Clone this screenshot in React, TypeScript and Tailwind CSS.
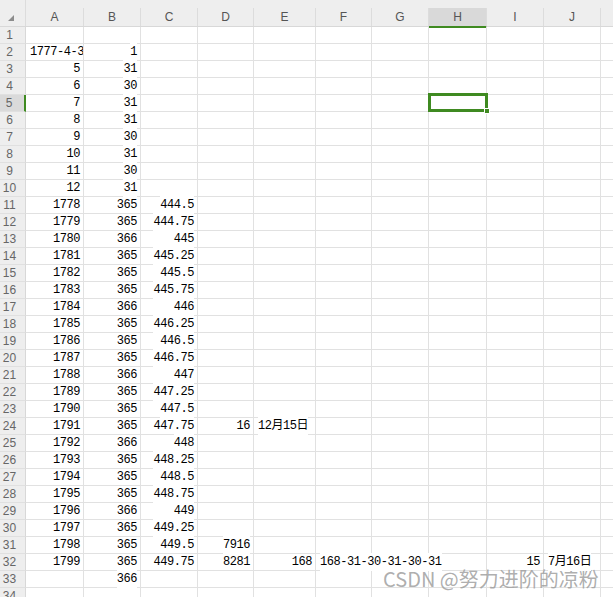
import React from 'react';

const COLS = ['A', 'B', 'C', 'D', 'E', 'F', 'G', 'H', 'I', 'J', 'K'];
const WIDTHS = [58, 57, 57, 56, 62, 56, 57, 58, 57, 57, 40];

type Val = string | number | null;

// row number -> cells A..J
const data: Record<number, Val[]> = {
  2: ['1777-4-3', 1],
  3: [5, 31],
  4: [6, 30],
  5: [7, 31],
  6: [8, 31],
  7: [9, 30],
  8: [10, 31],
  9: [11, 30],
  10: [12, 31],
  11: [1778, 365, '444.5'],
  12: [1779, 365, '444.75'],
  13: [1780, 366, 445],
  14: [1781, 365, '445.25'],
  15: [1782, 365, '445.5'],
  16: [1783, 365, '445.75'],
  17: [1784, 366, 446],
  18: [1785, 365, '446.25'],
  19: [1786, 365, '446.5'],
  20: [1787, 365, '446.75'],
  21: [1788, 366, 447],
  22: [1789, 365, '447.25'],
  23: [1790, 365, '447.5'],
  24: [1791, 365, '447.75', 16, '12月15日'],
  25: [1792, 366, 448],
  26: [1793, 365, '448.25'],
  27: [1794, 365, '448.5'],
  28: [1795, 365, '448.75'],
  29: [1796, 366, 449],
  30: [1797, 365, '449.25'],
  31: [1798, 365, '449.5', 7916],
  32: [1799, 365, '449.75', 8281, 168, '168-31-30-31-30-31', null, null, 15, '7月16日'],
  33: [null, 366],
};

const isText = (v: Val) => typeof v === 'string' && !/^[\d.]+$/.test(v);

function Cell({ v, w, clip }: { v: Val; w: number; clip: boolean }) {
  const left = v !== null && isText(v);
  return (
    <div
      style={{ width: w }}
      className={`h-[17px] shrink-0 border-r border-b border-[#e1e1e1] flex items-center whitespace-nowrap ${
        left ? 'justify-start pl-[4px]' : 'justify-end pr-[3px]'
      } ${clip ? 'overflow-hidden' : 'overflow-visible'}`}
    >
      {v !== null && <span className="relative z-10 bg-white">{v}</span>}
    </div>
  );
}

export default function App() {
  const rows = Array.from({ length: 34 }, (_, i) => i + 1);
  return (
    <div className="relative w-[613px] h-[597px] overflow-hidden bg-white font-['Liberation_Mono','Noto_Sans_CJK_SC',monospace] text-[12px] tracking-[-0.45px] text-black">
      {/* column headers */}
      <div className="flex h-[27px] bg-[#eeeeee] border-b border-[#d8d8d8] font-['Liberation_Sans',Arial,sans-serif] tracking-normal text-[12px] text-[#555]">
        <div className="w-[26px] shrink-0 flex items-end pb-[5px] pl-[8px] border-r border-[#dcdcdc]">
          <svg width="6" height="6" viewBox="0 0 6 6">
            <polygon points="6,0 6,6 0,6" fill="#8c8c8c" />
          </svg>
        </div>
        {COLS.map((c, i) => (
          <div key={c} style={{ width: WIDTHS[i] }} className="shrink-0 flex flex-col pt-[8px]">
            <div
              className={`flex-1 flex items-center justify-center border-r border-[#dcdcdc] ${
                c === 'H' ? 'bg-[#d9d9d9] border-b-2 border-b-[#3f8a21]' : ''
              }`}
            >
              {c !== 'K' ? c : ''}
            </div>
          </div>
        ))}
      </div>

      {rows.map((r) => {
        const vals = data[r] || [];
        return (
          <div key={r} className="flex">
            <div
              className={`w-[26px] h-[17px] shrink-0 flex items-center justify-center pr-[6px] border-b border-[#e0e0e0] font-['Liberation_Sans',Arial,sans-serif] tracking-normal text-[12px] text-[#666] ${
                r === 5 ? 'bg-[#dadada] border-r-2 border-r-[#3f8a21]' : 'bg-[#eeeeee] border-r border-r-[#d8d8d8]'
              }`}
            >
              {r}
            </div>
            {WIDTHS.map((w, i) => {
              const v = vals[i] ?? null;
              const next = vals[i + 1] ?? null;
              return <Cell key={i} v={v} w={w} clip={next !== null} />;
            })}
          </div>
        );
      })}

      {/* selected cell H5 */}
      <div className="absolute left-[428px] top-[93px] w-[60px] h-[19px] border-[3px] border-[#3f8a21]" />
      <div className="absolute left-[484px] top-[108px] w-[6px] h-[6px] bg-[#3f8a21] border border-white" />

      {/* watermark */}
      <div className="absolute left-[383px] top-[569px] font-['Noto_Sans_CJK_SC',sans-serif] tracking-normal text-[20px] leading-none text-[#999999]/80 whitespace-nowrap">
        CSDN @努力进阶的凉粉
      </div>
    </div>
  );
}
